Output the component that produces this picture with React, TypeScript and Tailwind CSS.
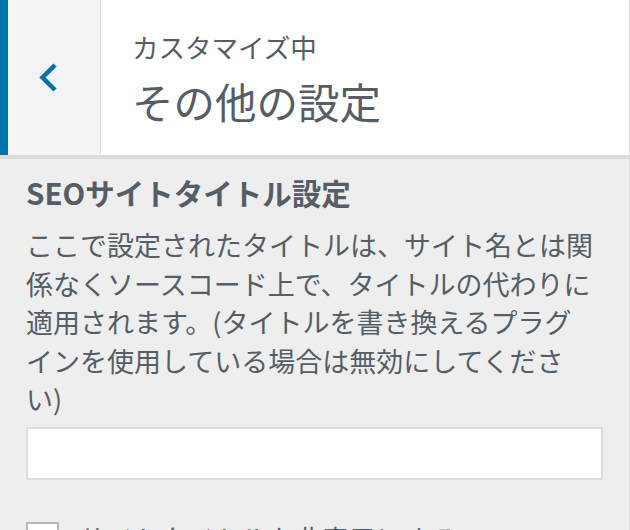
const jp = "font-['Noto_Sans_CJK_JP','Noto_Sans',sans-serif]"

const descLines = [
  "ここで設定されたタイトルは、サイト名とは関",
  "係なくソースコード上で、タイトルの代わりに",
  "適用されます。(タイトルを書き換えるプラグ",
  "インを使用している場合は無効にしてくださ",
  "い)",
]

function BackButton() {
  return (
    <div className="flex w-[93px] shrink-0 items-center border-r border-[#dcdcde] bg-[#f3f3f5] pl-[31px]">
      <svg width="18" height="29" viewBox="0 0 18 29" fill="none">
        <polyline points="16,2 3.5,14.5 16,27" stroke="#0073aa" strokeWidth="4.5" />
      </svg>
    </div>
  )
}

export default function App() {
  return (
    <div className={`h-[530px] w-[630px] overflow-hidden border-r border-[#dddddd] bg-[#eeeeee] text-[#555d66] ${jp}`}>
      {/* header */}
      <div className="flex h-[159px] border-b-4 border-[#dcdcdc] bg-white">
        <div className="w-[8px] shrink-0 bg-[#0073aa]" />
        <BackButton />
        <div className="flex flex-col pl-[31px] pt-[31px]">
          <span className="text-[26.5px] leading-[32px]">カスタマイズ中</span>
          <span className="mt-[13px] text-[41.5px] leading-[50px]">その他の設定</span>
        </div>
      </div>

      {/* section */}
      <div className="px-[26px] pt-[14px]">
        <h3 className="text-[29.5px] font-bold leading-[38px]">SEOサイトタイトル設定</h3>
        <p className="mt-[15px] whitespace-nowrap text-[27px] leading-[38.5px]">
          {descLines.map((line) => (
            <span key={line} className="block">
              {line}
            </span>
          ))}
        </p>
        <input
          type="text"
          className="mt-[8px] block h-[53px] w-full border-2 border-[#dddddd] bg-white px-3 text-[24px] outline-none"
        />
        <label className="mt-[42px] flex items-start gap-[20px]">
          <span className="h-[33px] w-[33px] shrink-0 border-2 border-[#b4b9be] bg-white" />
          <span className="text-[27px] leading-[33px]">サイトタイトルを非表示にする</span>
        </label>
      </div>
    </div>
  )
}
